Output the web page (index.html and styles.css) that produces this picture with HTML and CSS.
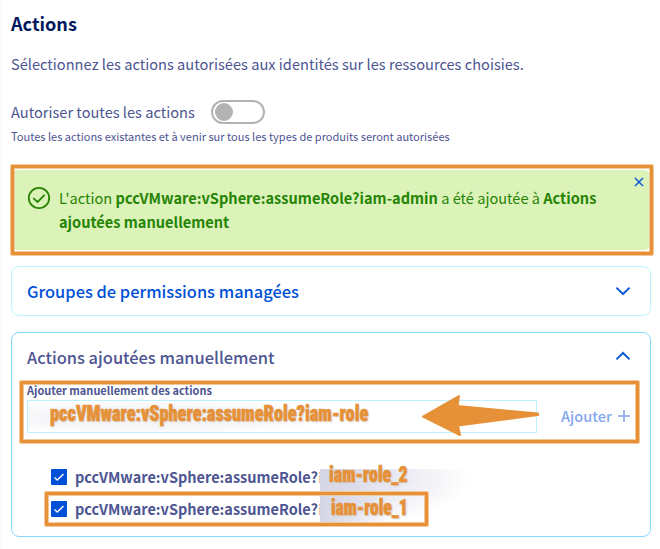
FILE: index.html
```html
<!DOCTYPE html>
<html lang="fr">
<head>
<meta charset="utf-8">
<title>Actions</title>
<link rel="stylesheet" href="styles.css">
</head>
<body>
<main class="page">
  <h1 class="title">Actions</h1>
  <p class="intro">Sélectionnez les actions autorisées aux identités sur les ressources choisies.</p>
  <div class="toggle-row">
    <span class="toggle-label">Autoriser toutes les actions</span>
    <span class="toggle"><span class="knob"></span></span>
  </div>
  <p class="hint">Toutes les actions existantes et à venir sur tous les types de produits seront autorisées</p>

  <section class="alert">
    <svg class="alert-icon" width="24" height="24" viewBox="0 0 24 24"><circle cx="12" cy="12" r="10.2"/><path d="M6.3 12.2l4.3 3.8 7-7.2"/></svg>
    <p class="alert-text">L'action <b>pccVMware:vSphere:assumeRole?iam-admin</b> a été ajoutée à <b>Actions<br>ajoutées manuellement</b></p>
    <svg class="close" width="10" height="10" viewBox="0 0 10 10"><path d="M1 1l8 8M9 1L1 9"/></svg>
    <span class="mark mark-alert"></span>
  </section>

  <section class="card managed">
    <h2 class="card-title">Groupes de permissions managées</h2>
    <svg class="chevron" width="16" height="10" viewBox="0 0 16 10"><path d="M1.4 1.6L8 8l6.6-6.4"/></svg>
  </section>

  <section class="card manual">
    <header class="card-head">
      <h2 class="card-title">Actions ajoutées manuellement</h2>
      <svg class="chevron" width="16" height="10" viewBox="0 0 16 10"><path d="M1.4 8.4L8 2l6.6 6.4"/></svg>
    </header>
    <div class="add">
      <label class="add-label">Ajouter manuellement des actions</label>
      <div class="add-row">
        <div class="field"><span class="stamp stamp-field">pccVMware:vSphere:assumeRole?iam-role</span></div>
        <span class="add-button">Ajouter
          <svg width="12" height="12" viewBox="0 0 12 12"><path d="M6 0v12M0 6h12"/></svg>
        </span>
      </div>
      <span class="mark mark-add"></span>
      <svg class="arrow" width="120" height="44" viewBox="0 0 120 44"><path d="M2 22.5L38 2l-1.5 10L117 19.5v1.5L37 31.5l2 9.5z"/></svg>
    </div>
    <ul class="list">
      <li class="item">
        <svg class="check" width="16" height="16" viewBox="0 0 16 16"><rect width="16" height="16" rx="1"/><path d="M3.5 8.5l2.8 2.5L12.5 5"/></svg>
        <span>pccVMware:vSphere:assumeRole?<i class="cut">i</i></span>
      </li>
      <li class="item">
        <svg class="check" width="16" height="16" viewBox="0 0 16 16"><rect width="16" height="16" rx="1"/><path d="M3.5 8.5l2.8 2.5L12.5 5"/></svg>
        <span>pccVMware:vSphere:assumeRole?<i class="cut">i</i></span>
      </li>
      <li class="smudge"></li>
      <li class="mark mark-item"></li>
      <li class="stamp stamp-two">iam-role_2</li>
      <li class="stamp stamp-one">iam-role_1</li>
    </ul>
  </section>
</main>
</body>
</html>
```
FILE: styles.css
```css
* { box-sizing: border-box; margin: 0; padding: 0; }
body {
  background: #fff;
  color: #4d5592;
  font: 400 14.61px/24px "Noto Sans CJK JP", "Noto Sans", sans-serif;
}
svg { display: block; fill: none; flex: none; }
.page {
  width: 660px;
  height: 549px;
  padding: 11px 9px 0 10px;
  border-left: 1px solid #fafafa;
  overflow: hidden;
}
.title { font-size: 18.1px; line-height: 24px; font-weight: 700; color: #00185e; }
.intro { margin-top: 17px; }
.toggle-row { display: flex; align-items: center; gap: 16px; margin-top: 24px; height: 24px; }
.toggle {
  width: 54px; height: 24px; padding: 1px 2px;
  border: 2px solid #b3b3b3; border-radius: 12px;
}
.knob { display: block; width: 18px; height: 18px; border-radius: 50%; background: #b3b3b3; }
.hint { margin-top: 4px; font-size: 11.04px; line-height: 16px; }

.alert {
  position: relative;
  display: flex;
  height: 80px;
  margin: 26px 1px 0;
  padding: 16px 15px 0;
  border-radius: 6px;
  background: #dbf2b9;
  color: #268403;
}
.alert-icon { stroke: #268403; stroke-width: 1.8; }
.alert-text { margin-left: 8px; font-size: 14.58px; white-space: nowrap; }
.close { position: absolute; right: 6px; top: 7px; stroke: #0e5bd8; stroke-width: 1.5; }

.mark {
  position: absolute;
  display: block;
  border: 3px solid #e69138;
  border-radius: 1px;
  box-shadow: 0 0 0 1px #f3c89b, inset 0 0 0 1px #f3c89b;
}
.mark-alert { left: -1px; right: -3px; top: -5px; bottom: -5px; }

.card { border: 1px solid #bef1ff; border-radius: 8px; background: #fff; }
.card-title { font-size: 16.42px; line-height: 24px; font-weight: 500; }
.chevron { stroke: #0e5bd8; stroke-width: 2; }
.managed {
  display: flex; align-items: center; justify-content: space-between;
  height: 50px; margin-top: 16px; padding: 0 19px 0 15px;
}
.managed .card-title { color: #0050d7; }
.manual { height: 205px; margin-top: 16px; border-color: #85d9fd; }
.card-head {
  display: flex; align-items: center; justify-content: space-between;
  height: 47px; padding: 0 19px 0 15px;
}
.card-head .card-title { padding-top: 1px; }
.card-head .chevron { margin-top: -2px; }
.add { position: relative; padding: 2px 15px 0; }
.add-label { display: block; font-size: 10.98px; line-height: 16px; font-weight: 700; }
.add-row { display: flex; align-items: center; margin-top: 2px; }
.field {
  width: 510px; height: 33px; padding: 1px 0 0 22px;
  border: 1px solid #bef1ff;
  background: radial-gradient(ellipse 190px 18px at 125px 16px, #f2f2f6, #f7f7fa 65%, #fff);
}
.add-button {
  display: flex; align-items: center; gap: 6px; margin: -1px 0 0 24px;
  font-weight: 500; font-size: 14.57px; color: #84a7eb;
}
.add-button svg { stroke: #84a7eb; stroke-width: 1.5; }
.mark-add { left: 8px; width: 619px; top: 1px; height: 62px; }
.arrow { position: absolute; left: 409px; top: 14px; fill: #e69138; stroke: #e69138; stroke-width: 2; stroke-linejoin: round; }

.stamp {
  display: inline-block;
  font: 900 21.5px/24px Roboto, sans-serif;
  font-stretch: 75%;
  color: #e69138;
  -webkit-text-stroke: .6px #e69138;
  text-shadow: 1px 1px 2px #ccc;
  transform: scaleX(.853);
  transform-origin: 0 0;
  white-space: nowrap;
}
.list { position: relative; list-style: none; padding: 28px 0 0 39px; }
.item { display: flex; align-items: center; gap: 8px; height: 32px; font-weight: 700; font-size: 14.52px; }
.check rect { fill: #0050d7; }
.check path { stroke: #fff; stroke-width: 1.4; }
.cut { font-style: normal; font-weight: 500; color: #e2b8a6; }
.smudge {
  position: absolute; left: 308px; top: 36px; width: 150px; height: 53px;
  background:
    linear-gradient(90deg, #d5d5e5, rgba(228,228,239,0) 45%),
    radial-gradient(ellipse 150px 50px at 0 10px, #e2e2ed, #e8e8f1 50%, rgba(255,255,255,0));
}
.mark-item { left: 33px; top: 59px; width: 383px; height: 34px; }
.stamp-two { position: absolute; left: 317px; top: 30px; transform: scaleX(.84); }
.stamp-one { position: absolute; left: 319px; top: 63px; transform: scaleX(.82); }
```
